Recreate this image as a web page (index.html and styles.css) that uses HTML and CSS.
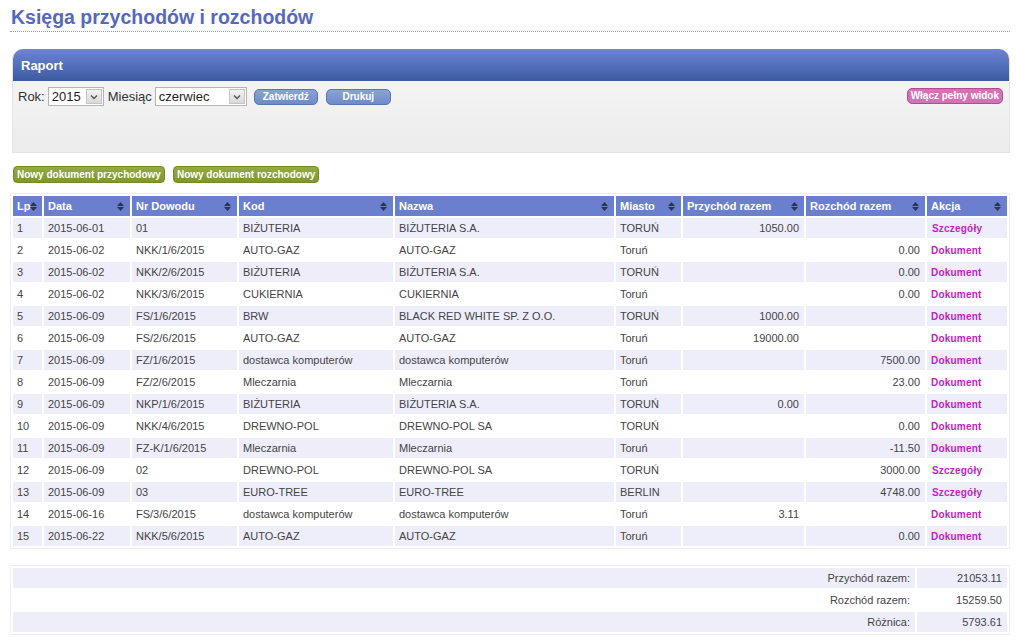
FILE: index.html
```html
<!DOCTYPE html>
<html lang="pl">
<head>
<meta charset="utf-8">
<title>Księga przychodów i rozchodów</title>
<link rel="stylesheet" href="styles.css">
</head>
<body>
<div class="page">
  <h1 class="title">Księga przychodów i rozchodów</h1>

  <div class="panel">
    <div class="panel-head">Raport</div>
    <div class="panel-body">
      <div class="controls">
        <span class="lbl">Rok:</span>
        <span class="sel sel-year"><span class="sel-val">2015</span><span class="sel-btn"><svg width="8" height="6" viewBox="0 0 8 6"><path d="M1 1.5 L4 4.5 L7 1.5" fill="none" stroke="#555" stroke-width="1.4"/></svg></span></span>
        <span class="lbl">Miesiąc</span>
        <span class="sel sel-month"><span class="sel-val">czerwiec</span><span class="sel-btn"><svg width="8" height="6" viewBox="0 0 8 6"><path d="M1 1.5 L4 4.5 L7 1.5" fill="none" stroke="#555" stroke-width="1.4"/></svg></span></span>
        <span class="btn btn-blue btn-zat">Zatwierdź</span>
        <span class="btn btn-blue btn-druk">Drukuj</span>
        <span class="spacer"></span>
        <span class="btn btn-pink">Włącz pełny widok</span>
      </div>
    </div>
  </div>

  <div class="actions">
    <span class="btn btn-green">Nowy dokument przychodowy</span>
    <span class="btn btn-green">Nowy dokument rozchodowy</span>
  </div>

  <div class="box">
    <table class="grid">
      <colgroup>
        <col class="c-lp"><col class="c-data"><col class="c-nr"><col class="c-kod"><col class="c-nazwa"><col class="c-miasto"><col class="c-prz"><col class="c-roz"><col class="c-akcja">
      </colgroup>
      <thead>
        <tr>
          <th><span class="th-in">Lp<svg class="sort" width="7" height="9" viewBox="0 0 7 9"><path d="M3.5 0 L7 4 L0 4 Z M0 5 L7 5 L3.5 9 Z" fill="#2b3252"/></svg></span></th>
          <th><span class="th-in">Data<svg class="sort" width="7" height="9" viewBox="0 0 7 9"><path d="M3.5 0 L7 4 L0 4 Z M0 5 L7 5 L3.5 9 Z" fill="#2b3252"/></svg></span></th>
          <th><span class="th-in">Nr Dowodu<svg class="sort" width="7" height="9" viewBox="0 0 7 9"><path d="M3.5 0 L7 4 L0 4 Z M0 5 L7 5 L3.5 9 Z" fill="#2b3252"/></svg></span></th>
          <th><span class="th-in">Kod<svg class="sort" width="7" height="9" viewBox="0 0 7 9"><path d="M3.5 0 L7 4 L0 4 Z M0 5 L7 5 L3.5 9 Z" fill="#2b3252"/></svg></span></th>
          <th><span class="th-in">Nazwa<svg class="sort" width="7" height="9" viewBox="0 0 7 9"><path d="M3.5 0 L7 4 L0 4 Z M0 5 L7 5 L3.5 9 Z" fill="#2b3252"/></svg></span></th>
          <th><span class="th-in">Miasto<svg class="sort" width="7" height="9" viewBox="0 0 7 9"><path d="M3.5 0 L7 4 L0 4 Z M0 5 L7 5 L3.5 9 Z" fill="#2b3252"/></svg></span></th>
          <th><span class="th-in">Przychód razem<svg class="sort" width="7" height="9" viewBox="0 0 7 9"><path d="M3.5 0 L7 4 L0 4 Z M0 5 L7 5 L3.5 9 Z" fill="#2b3252"/></svg></span></th>
          <th><span class="th-in">Rozchód razem<svg class="sort" width="7" height="9" viewBox="0 0 7 9"><path d="M3.5 0 L7 4 L0 4 Z M0 5 L7 5 L3.5 9 Z" fill="#2b3252"/></svg></span></th>
          <th><span class="th-in">Akcja<svg class="sort" width="7" height="9" viewBox="0 0 7 9"><path d="M3.5 0 L7 4 L0 4 Z M0 5 L7 5 L3.5 9 Z" fill="#2b3252"/></svg></span></th>
        </tr>
      </thead>
      <tbody>
        <tr><td>1</td><td>2015-06-01</td><td>01</td><td>BIŻUTERIA</td><td>BIŻUTERIA S.A.</td><td>TORUŃ</td><td class="num">1050.00</td><td class="num"></td><td><a class="link link-sz">Szczegóły</a></td></tr>
        <tr><td>2</td><td>2015-06-02</td><td>NKK/1/6/2015</td><td>AUTO-GAZ</td><td>AUTO-GAZ</td><td>Toruń</td><td class="num"></td><td class="num">0.00</td><td><a class="link">Dokument</a></td></tr>
        <tr><td>3</td><td>2015-06-02</td><td>NKK/2/6/2015</td><td>BIŻUTERIA</td><td>BIŻUTERIA S.A.</td><td>TORUŃ</td><td class="num"></td><td class="num">0.00</td><td><a class="link">Dokument</a></td></tr>
        <tr><td>4</td><td>2015-06-02</td><td>NKK/3/6/2015</td><td>CUKIERNIA</td><td>CUKIERNIA</td><td>Toruń</td><td class="num"></td><td class="num">0.00</td><td><a class="link">Dokument</a></td></tr>
        <tr><td>5</td><td>2015-06-09</td><td>FS/1/6/2015</td><td>BRW</td><td>BLACK RED WHITE SP. Z O.O.</td><td>TORUŃ</td><td class="num">1000.00</td><td class="num"></td><td><a class="link">Dokument</a></td></tr>
        <tr><td>6</td><td>2015-06-09</td><td>FS/2/6/2015</td><td>AUTO-GAZ</td><td>AUTO-GAZ</td><td>Toruń</td><td class="num">19000.00</td><td class="num"></td><td><a class="link">Dokument</a></td></tr>
        <tr><td>7</td><td>2015-06-09</td><td>FZ/1/6/2015</td><td>dostawca komputerów</td><td>dostawca komputerów</td><td>Toruń</td><td class="num"></td><td class="num">7500.00</td><td><a class="link">Dokument</a></td></tr>
        <tr><td>8</td><td>2015-06-09</td><td>FZ/2/6/2015</td><td>Mleczarnia</td><td>Mleczarnia</td><td>Toruń</td><td class="num"></td><td class="num">23.00</td><td><a class="link">Dokument</a></td></tr>
        <tr><td>9</td><td>2015-06-09</td><td>NKP/1/6/2015</td><td>BIŻUTERIA</td><td>BIŻUTERIA S.A.</td><td>TORUŃ</td><td class="num">0.00</td><td class="num"></td><td><a class="link">Dokument</a></td></tr>
        <tr><td>10</td><td>2015-06-09</td><td>NKK/4/6/2015</td><td>DREWNO-POL</td><td>DREWNO-POL SA</td><td>TORUŃ</td><td class="num"></td><td class="num">0.00</td><td><a class="link">Dokument</a></td></tr>
        <tr><td>11</td><td>2015-06-09</td><td>FZ-K/1/6/2015</td><td>Mleczarnia</td><td>Mleczarnia</td><td>Toruń</td><td class="num"></td><td class="num">-11.50</td><td><a class="link">Dokument</a></td></tr>
        <tr><td>12</td><td>2015-06-09</td><td>02</td><td>DREWNO-POL</td><td>DREWNO-POL SA</td><td>TORUŃ</td><td class="num"></td><td class="num">3000.00</td><td><a class="link link-sz">Szczegóły</a></td></tr>
        <tr><td>13</td><td>2015-06-09</td><td>03</td><td>EURO-TREE</td><td>EURO-TREE</td><td>BERLIN</td><td class="num"></td><td class="num">4748.00</td><td><a class="link link-sz">Szczegóły</a></td></tr>
        <tr><td>14</td><td>2015-06-16</td><td>FS/3/6/2015</td><td>dostawca komputerów</td><td>dostawca komputerów</td><td>Toruń</td><td class="num">3.11</td><td class="num"></td><td><a class="link">Dokument</a></td></tr>
        <tr><td>15</td><td>2015-06-22</td><td>NKK/5/6/2015</td><td>AUTO-GAZ</td><td>AUTO-GAZ</td><td>Toruń</td><td class="num"></td><td class="num">0.00</td><td><a class="link">Dokument</a></td></tr>
      </tbody>
    </table>
  </div>

  <div class="box box-sum">
    <table class="sum">
      <colgroup><col><col class="c-sumval"></colgroup>
      <tbody>
        <tr><td class="num">Przychód razem:</td><td class="num">21053.11</td></tr>
        <tr><td class="num">Rozchód razem:</td><td class="num">15259.50</td></tr>
        <tr><td class="num">Różnica:</td><td class="num">5793.61</td></tr>
      </tbody>
    </table>
  </div>
</div>
</body>
</html>
```

FILE: styles.css
```css
* { box-sizing: border-box; }

html, body {
  margin: 0;
  padding: 0;
  background: #ffffff;
}

body {
  font-family: "Liberation Sans", Arial, sans-serif;
  font-size: 11px;
  color: #444;
}

.page {
  width: 1002px;
  padding-left: 10px;
}

.title {
  margin: 0;
  padding: 5px 0 2px 1px;
  font-size: 19.5px;
  line-height: 24px;
  font-weight: bold;
  color: #5468be;
  border-bottom: 1px dotted #8a93b8;
  width: 1000px;
}

/* Panel */
.panel {
  margin: 17px 0 0 2px;
  width: 998px;
  border: 1px solid #e3e3e3;
  border-top: none;
  border-radius: 10px 10px 0 0;
}

.panel-head {
  height: 32px;
  padding: 9px 0 0 8px;
  border-radius: 10px 10px 0 0;
  background: linear-gradient(to bottom, #6e83d2 0%, #5470bd 50%, #3c5a9f 100%);
  color: #fff;
  font-weight: bold;
  font-size: 13px;
  line-height: 15px;
}

.panel-body {
  height: 71px;
  background: linear-gradient(to bottom, #f4f4f4, #ececec);
  padding: 6px 6px 0 5px;
}

.controls {
  display: flex;
  align-items: center;
  font-size: 13px;
  color: #333;
  height: 19px;
}

.lbl { margin-right: 3px; }

.sel {
  display: inline-flex;
  align-items: stretch;
  height: 19px;
  background: #fff;
  border: 1px solid #b5b5b5;
  margin-right: 4px;
}

.sel-year { width: 56px; margin-left: 0; }
.sel-month { width: 92px; }

.sel-val {
  flex: 1;
  padding-left: 3px;
  line-height: 17px;
  font-size: 13px;
  color: #222;
}

.sel-btn {
  width: 16px;
  margin: 1px;
  display: flex;
  align-items: center;
  justify-content: center;
  background: linear-gradient(to bottom, #f2f2f2, #d9d9d9);
  border: 1px solid #c4c4c4;
}

.btn {
  display: inline-flex;
  align-items: center;
  justify-content: center;
  color: #fff;
  font-weight: bold;
  font-size: 10px;
  border-radius: 5px;
  white-space: nowrap;
}

.btn-blue {
  height: 16px;
  background: linear-gradient(to bottom, #8aa3d6, #6f8bc6);
  border: 1px solid #5a76b0;
}

.btn-zat { width: 64px; margin-left: 3px; }
.btn-druk { width: 65px; margin-left: 8px; }

.spacer { flex: 1; }

.btn-pink {
  height: 16px;
  padding: 0 3px;
  background: #d571b4;
  border: 1px solid #b14c92;
  margin-top: -2px;
}

/* Action buttons */
.actions {
  display: flex;
  gap: 8px;
  margin: 13px 0 0 3px;
}

.btn-green {
  height: 17px;
  padding: 0 3px;
  background: linear-gradient(to bottom, #93ab40, #7f9632);
  border: 1px solid #728a2a;
  border-radius: 4px;
}

/* Table box */
.box {
  margin-top: 10px;
  width: 1000px;
  border: 1px solid #eceff6;
}

.grid, .sum {
  width: 100%;
  table-layout: fixed;
  border-collapse: separate;
  border-spacing: 2px;
}

.c-lp { width: 29px; }
.c-data { width: 86px; }
.c-nr { width: 105px; }
.c-kod { width: 154px; }
.c-nazwa { width: 219px; }
.c-miasto { width: 65px; }
.c-prz { width: 121px; }
.c-roz { width: 119px; }
.c-akcja { width: 80px; }

.grid th {
  height: 20px;
  padding: 0 4px;
  background: #6a80cf;
  color: #fff;
  font-weight: bold;
  font-size: 11px;
  text-align: left;
  white-space: nowrap;
}

.th-in {
  display: flex;
  align-items: center;
  justify-content: space-between;
}

.sort { flex: none; margin-right: 2px; }

.grid th:first-child .th-in { justify-content: flex-start; }

.grid td {
  height: 20px;
  padding: 0 4px;
  white-space: nowrap;
  overflow: hidden;
  font-size: 11px;
  color: #444;
}

.grid tbody tr:nth-child(odd) td { background: #eeeefb; }

.num { text-align: right; }

.grid td.num { padding-right: 5px; }

.link {
  font-weight: bold;
  font-size: 10px;
  color: #c21dbd;
  letter-spacing: 0.2px;
}

.link-sz { margin-left: 1px; }

.box-sum { margin-top: 16px; }

.c-sumval { width: 90px; }

.sum td {
  height: 20px;
  padding: 0 5px;
  font-size: 11px;
  color: #444;
}

.sum tr:nth-child(odd) td { background: #eeeefb; }
```
